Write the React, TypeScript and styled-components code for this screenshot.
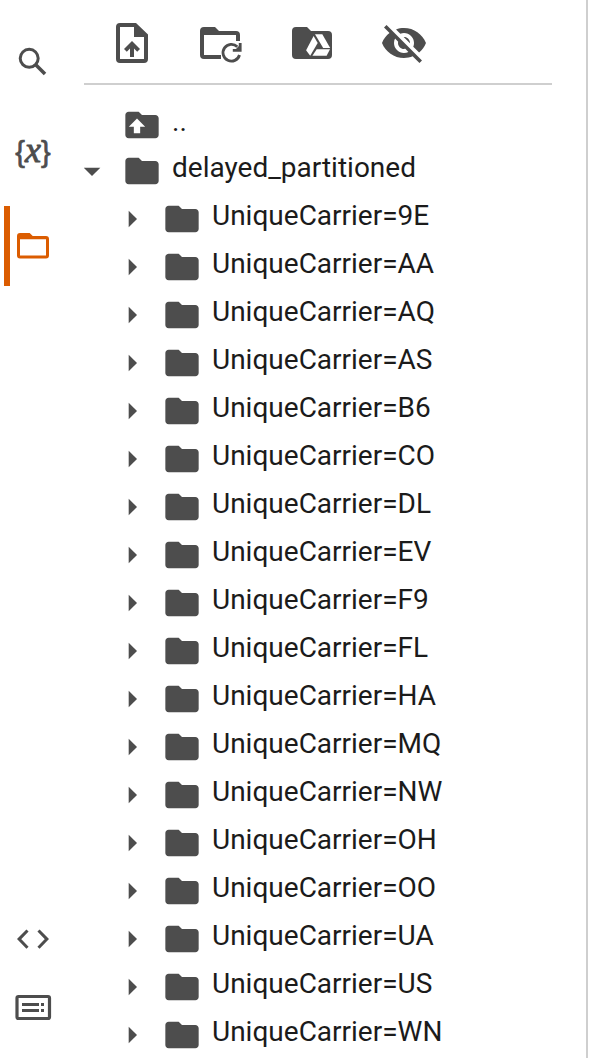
import React from "react";
import styled, { createGlobalStyle } from "styled-components";

const ink = "#4d4d4d";
const accent = "#db5c00";

const GlobalStyle = createGlobalStyle`
  * { box-sizing: border-box; }
  body { margin: 0; background: #fff; overflow: hidden; }
  svg { display: block; flex: none; }
`;

const Screen = styled.div`
  display: flex;
  width: 592px;
  height: 1058px;
  overflow: hidden;
  font-family: Roboto, sans-serif;
  color: #1b1b1b;
`;

const Rail = styled.nav`
  flex: none;
  width: 84px;
  display: flex;
  flex-direction: column;
  justify-content: space-between;
  padding: 22px 0 17px 4px;
`;

const RailGroup = styled.div<{ $gap: number }>`
  display: flex;
  flex-direction: column;
  gap: ${(p) => p.$gap}px;
`;

const RailItem = styled.div<{ $active?: boolean; $height: number }>`
  display: flex;
  align-items: center;
  height: ${(p) => p.$height}px;
  padding-left: 3px;
  border-left: 6px solid ${(p) => (p.$active ? accent : "transparent")};
  color: ${(p) => (p.$active ? accent : ink)};
`;

const VariableMark = styled.div`
  display: flex;
  align-items: center;
  justify-content: center;
  width: 40px;
  height: 40px;
  margin-bottom: 5px;
  font: 29px/40px "Liberation Sans", sans-serif;
  -webkit-text-stroke: 0.7px currentColor;
`;

const VariableName = styled.i`
  font: italic 36px/34px "Liberation Serif", serif;
  -webkit-text-stroke: 0.9px currentColor;
  padding-bottom: 4px;
`;

const Panel = styled.main`
  width: 504px;
  height: 1058px;
  border-right: 2px solid #cfcfcf;
  overflow: hidden;
`;

const Toolbar = styled.div`
  display: flex;
  gap: 44px;
  width: 468px;
  height: 85px;
  padding: 19px 0 0 24px;
  border-bottom: 2px solid #cfcfcf;
  color: ${ink};

  > :first-child {
    margin-right: -4px;
  }
`;

const Tree = styled.div`
  padding-top: 16px;
`;

const Row = styled.div<{ $depth: number; $height?: number }>`
  display: flex;
  height: ${(p) => p.$height ?? 48}px;
  padding-top: 4px;
  padding-left: ${(p) => p.$depth * 40}px;
  margin-left: -12px;
  color: ${ink};
`;

const Toggle = styled.span`
  width: 50px;
  height: 40px;
`;

const Label = styled.span`
  height: 40px;
  padding-left: 10px;
  font-size: 28px;
  line-height: 33px;
  color: #1b1b1b;
  white-space: nowrap;
`;

const Icon = ({ size = 48, box = "0 0 24 24", children }: { size?: number; box?: string; children: React.ReactNode }) => (
  <svg width={size} height={size} viewBox={box} fill="currentColor">
    {children}
  </svg>
);

const folderShape = "M10 4H4c-1.1 0-1.99.9-1.99 2L2 18c0 1.1.9 2 2 2h16c1.1 0 2-.9 2-2V8c0-1.1-.9-2-2-2h-8l-2-2z";

const UploadIcon = () => (
  <Icon box="0 0 48 48">
    <path fillRule="evenodd" d="M12 4h16l12 11.5V40a4 4 0 0 1-4 4H12a4 4 0 0 1-4-4V8a4 4 0 0 1 4-4zm0 4v32h24V18H26V8z" />
    <path d="M24 22l8 8-2.8 2.8-3.2-3.2V38h-4v-8.400l-3.200 3.200L16 30z" />
  </Icon>
);

const RefreshFolderIcon = () => (
  <Icon box="0 0 48 48">
    <path d="M8 8h11l4 4h17a4 4 0 0 1 4 4v2h-4v-2H8v20h17v4H8a4 4 0 0 1-4-4V12a4 4 0 0 1 4-4z" />
    <path d="M40 16h4v6h-4z" />
    <path d="M43.500 36a8.400 8.400 0 1 1-2.200-8.300" fill="none" stroke="currentColor" strokeWidth="2.800" />
    <path d="M42.800 24h2.800v8.700h-8.800v-2.800h3.200l2.800-2.800z" />
  </Icon>
);

const DriveFolderIcon = () => (
  <Icon box="0 0 48 48">
    <path d="M8 8h11l4 4h17a4 4 0 0 1 4 4v20a4 4 0 0 1-4 4H8a4 4 0 0 1-4-4V12a4 4 0 0 1 4-4z" />
    <g fill="#fff">
      <path d="M25.600 16.900L18.100 31.200l4.100 5.600L29.700 24.100z" />
      <path d="M27 15.300h7.300L42.200 29h-7z" />
      <path d="M28.700 30.300h13.300L38.600 36.800H24.400z" />
    </g>
  </Icon>
);

const HiddenIcon = () => (
  <Icon>
    <path d="M12 7c2.760 0 5 2.240 5 5 0 .65-.13 1.260-.36 1.830l2.920 2.920c1.510-1.260 2.700-2.890 3.430-4.750-1.730-4.390-6-7.500-11-7.500-1.400 0-2.740.25-3.980.7l2.160 2.160C10.740 7.130 11.350 7 12 7zM2 4.270l2.280 2.280.46.46C3.080 8.300 1.780 10.020 1 12c1.730 4.390 6 7.500 11 7.500 1.550 0 3.030-.3 4.380-.84l.42.42L19.730 22 21 20.730 3.270 3 2 4.270zM7.530 9.800l1.550 1.550c-.05.21-.08.43-.08.65 0 1.660 1.340 3 3 3 .22 0 .44-.03.65-.08l1.550 1.550c-.67.33-1.410.53-2.200.53-2.760 0-5-2.240-5-5 0-.79.2-1.530.53-2.200zm4.310-.78l3.150 3.150.02-.16c0-1.660-1.340-3-3-3l-.17.01z" />
  </Icon>
);

const FolderIcon = ({ up }: { up?: boolean }) => (
  <Icon size={40}>
    <path d={folderShape} />
    {up && <path d="M9 8.100l4.900 4.900h-3v4H7.100v-4H4.100z" fill="#fff" />}
  </Icon>
);

const SearchIcon = () => (
  <Icon size={40} box="13 42 40 40">
    <circle cx="29.200" cy="58.300" r="9" fill="none" stroke="currentColor" strokeWidth="3" />
    <path d="M35.500 64.600l9.500 9.500" stroke="currentColor" strokeWidth="3.600" />
  </Icon>
);

const ActiveFolderIcon = () => (
  <Icon size={40} box="13 226 40 40">
    <path fillRule="evenodd" d="M20 233h9.700l3 3H46a3 3 0 0 1 3 3v16.600a3 3 0 0 1-3 3H20a3 3 0 0 1-3-3V236a3 3 0 0 1 3-3zm0 6.200v16.400h26v-16.400z" />
  </Icon>
);

const CodeIcon = () => (
  <Icon size={40} box="13 919 40 40">
    <path d="M27.500 930.500l-8.400 8.600 8.400 8.600M38.500 930.500l8.400 8.600-8.400 8.600" fill="none" stroke="currentColor" strokeWidth="3" />
  </Icon>
);

const TerminalIcon = () => (
  <Icon size={40} box="13 987 40 40">
    <rect x="17" y="996.500" width="32.500" height="22" rx="1.500" fill="none" stroke="currentColor" strokeWidth="3.200" />
    <path d="M22 1003h17v3H22zM41 1003h3v3h-3zM22 1009h17v3H22zM41 1009h3v3h-3z" />
  </Icon>
);

const carriers = ["9E", "AA", "AQ", "AS", "B6", "CO", "DL", "EV", "F9", "FL", "HA", "MQ", "NW", "OH", "OO", "UA", "US", "WN"];

export default function App() {
  return (
    <Screen>
      <GlobalStyle />
      <Rail>
        <RailGroup $gap={12}>
          <RailItem $height={80}><SearchIcon /></RailItem>
          <RailItem $height={80}>
            <VariableMark>{"{"}<VariableName>x</VariableName>{"}"}</VariableMark>
          </RailItem>
          <RailItem $height={80} $active><ActiveFolderIcon /></RailItem>
        </RailGroup>
        <RailGroup $gap={0}>
          <RailItem $height={68}><CodeIcon /></RailItem>
          <RailItem $height={68}><TerminalIcon /></RailItem>
        </RailGroup>
      </Rail>
      <Panel>
        <Toolbar>
          <UploadIcon />
          <RefreshFolderIcon />
          <DriveFolderIcon />
          <HiddenIcon />
        </Toolbar>
        <Tree>
          <Row $depth={0} $height={46}>
            <Toggle />
            <FolderIcon up />
            <Label>..</Label>
          </Row>
          <Row $depth={0}>
            <Toggle><Icon size={40}><path d="M7 10l5 5 5-5z" /></Icon></Toggle>
            <FolderIcon />
            <Label>delayed_partitioned</Label>
          </Row>
          {carriers.map((code) => (
            <Row key={code} $depth={1}>
              <Toggle><Icon size={40}><path d="M10 17l5-5-5-5z" /></Icon></Toggle>
              <FolderIcon />
              <Label>UniqueCarrier={code}</Label>
            </Row>
          ))}
        </Tree>
      </Panel>
    </Screen>
  );
}
